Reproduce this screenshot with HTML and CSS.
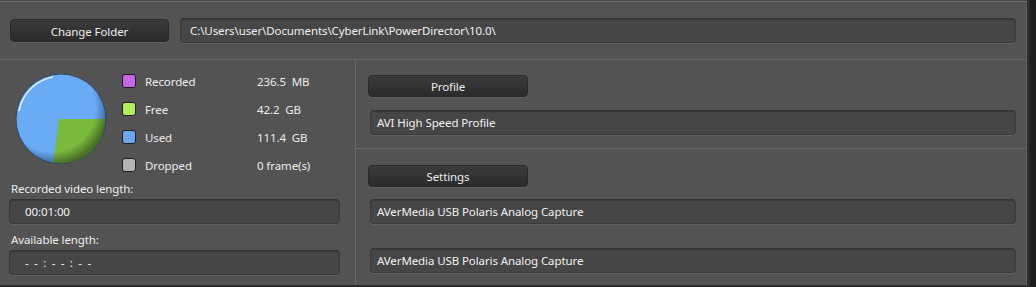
FILE: index.html
```html
<!DOCTYPE html>
<html lang="en">

<head>
    <meta charset="UTF-8">
    <title>Capture Settings</title>
    <link rel="stylesheet" href="styles.css">
</head>

<body>

    <div class="window">
        <div class="main">
            <!-- Folder row -->
            <div class="folder-bar">
                <button class="btn btn-folder">Change Folder</button>
                <div class="field field-path">C:\Users\user\Documents\CyberLink\PowerDirector\10.0\</div>
            </div>

            <div class="panels">
                <!-- Disk usage -->
                <div class="panel-left">
                    <div class="stats">
                        <svg class="pie" width="92" height="92" viewBox="0 0 92 92">
                            <defs>
                                <radialGradient id="shade" cx="40%" cy="38%" r="62%">
                                    <stop offset="78%" stop-color="#000" stop-opacity="0"/>
                                    <stop offset="100%" stop-color="#000" stop-opacity="0.4"/>
                                </radialGradient>
                            </defs>
                            <circle cx="46" cy="46" r="45" fill="#6aabf6"/>
                            <path d="M44 46 L91 46 A45 45 0 0 1 38 90.5 Z" fill="#7abb3e"/>
                            <circle cx="46" cy="46" r="45" fill="url(#shade)"/>
                            <path d="M4 38 A42.5 42.5 0 0 1 38 4" fill="none" stroke="#fff" stroke-opacity="0.8" stroke-width="1.5"/>
                            <circle cx="46" cy="46" r="45" fill="none" stroke="#2f4560" stroke-width="1"/>
                        </svg>
                        <ul class="legend">
                            <li><span class="swatch recorded"></span><span class="name">Recorded</span><span class="value">236.5&nbsp; MB</span></li>
                            <li><span class="swatch free"></span><span class="name">Free</span><span class="value">42.2&nbsp; GB</span></li>
                            <li><span class="swatch used"></span><span class="name">Used</span><span class="value">111.4&nbsp; GB</span></li>
                            <li><span class="swatch dropped"></span><span class="name">Dropped</span><span class="value">0 frame(s)</span></li>
                        </ul>
                    </div>
                    <div class="label">Recorded video length:</div>
                    <div class="field field-time">00:01:00</div>
                    <div class="label label-gap">Available length:</div>
                    <div class="field field-time field-empty">- - : - - : - -</div>
                </div>

                <!-- Profile and device -->
                <div class="panel-right">
                    <div class="section section-profile">
                        <button class="btn btn-section">Profile</button>
                        <div class="field field-wide">AVI High Speed Profile</div>
                    </div>
                    <div class="section section-settings">
                        <button class="btn btn-section">Settings</button>
                        <div class="field field-wide">AVerMedia USB Polaris Analog Capture</div>
                        <div class="field field-wide field-last">AVerMedia USB Polaris Analog Capture</div>
                    </div>
                </div>
            </div>
        </div>
        <div class="edge"></div>
    </div>

</body>

</html>
```

FILE: styles.css
```css
* {
    box-sizing: border-box;
    margin: 0;
    padding: 0;
}

body {
    width: 1036px;
    height: 287px;
    overflow: hidden;
    background-color: #4b4b4b;
    font-family: 'Noto Sans', 'Open Sans', sans-serif;
    font-size: 11.5px;
    letter-spacing: -0.1px;
    color: #ededed;
}

.window {
    display: flex;
    height: 287px;
}

.main {
    width: 1027px;
    margin-top: 1px;
    border-top: 1px solid #6d6d6d;
    border-right: 1px solid #626262;
    border-bottom: 2px solid #2a2a2a;
    background-color: #535353;
    display: flex;
    flex-direction: column;
}

.edge {
    flex: 1;
    background-color: #1d1d1d;
    border-left: 3px solid #2c2c2c;
}

/* Buttons */

.btn {
    font-family: inherit;
    font-size: 11.5px;
    letter-spacing: -0.1px;
    color: #ededed;
    background: linear-gradient(#3b3b3b, #2b2b2b);
    border: 1px solid #2a2a2a;
    border-radius: 4px;
    box-shadow: 0 1px 0 #5e5e5e;
    height: 23px;
    padding-top: 1px;
    cursor: pointer;
}

.btn-folder {
    width: 159px;
}

.btn-section {
    width: 160px;
    height: 22px;
}

/* Fields */

.field {
    height: 25px;
    line-height: 24px;
    background-color: #464646;
    border: 1px solid #3a3a3a;
    border-top-color: #343434;
    border-radius: 4px;
    box-shadow: 0 1px 0 #606060, inset 0 1px 1px rgba(0, 0, 0, 0.2);
    color: #f0f0f0;
    white-space: nowrap;
    overflow: hidden;
}

.folder-bar {
    height: 58px;
    display: flex;
    align-items: center;
    padding: 0 10px 0 10px;
    gap: 11px;
    border-bottom: 1px solid #6a6a6a;
}

.field-path {
    flex: 1;
    padding-left: 9px;
}

.panels {
    flex: 1;
    display: flex;
}

/* Left panel */

.panel-left {
    width: 356px;
    border-right: 1px solid #686868;
    padding: 0 15px 0 9px;
}

.stats {
    display: flex;
    height: 118px;
}

.pie {
    margin: 13px 0 0 6px;
}

.legend {
    list-style: none;
    margin: 7px 0 0 15px;
}

.legend li {
    display: flex;
    align-items: center;
    height: 28px;
}

.swatch {
    width: 14px;
    height: 14px;
    border: 1px solid #1f1f1f;
    border-radius: 3px;
    margin-right: 9px;
}

.swatch.recorded {
    background-color: #c864e8;
}

.swatch.free {
    background-color: #b2f05c;
}

.swatch.used {
    background-color: #6aa6ee;
}

.swatch.dropped {
    background-color: #b4b4b4;
}

.name {
    width: 112px;
}

.label {
    height: 21px;
    line-height: 22px;
    padding-left: 2px;
}

.label-gap {
    margin-top: 5px;
}

.field-time {
    padding-left: 15px;
}

.field-empty {
    letter-spacing: 1.2px;
}

/* Right panel */

.panel-right {
    flex: 1;
    display: flex;
    flex-direction: column;
}

.section {
    padding: 0 10px 0 12px;
}

.section-profile {
    height: 89px;
    padding-top: 15px;
    border-bottom: 1px solid #6a6a6a;
}

.section-settings {
    padding-top: 16px;
}

.field-wide {
    margin: 12px 0 0 2px;
    padding-left: 6px;
}

.section-profile .field-wide {
    margin-top: 13px;
}

.field-last {
    margin-top: 24px;
}
```
